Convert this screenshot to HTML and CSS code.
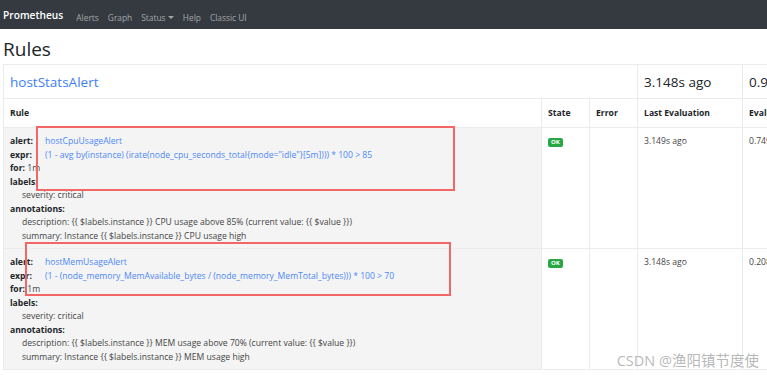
FILE: index.html
```html
<!DOCTYPE html>
<html lang="en">
<head>
    <meta charset="UTF-8">
    <meta name="viewport" content="width=device-width, initial-scale=1.0">
    <title>Prometheus Time Series Collection and Processing Server</title>
    <link rel="stylesheet" href="styles.css">
</head>
<body>
    <nav class="navbar">
        <a class="brand" href="#">Prometheus</a>
        <ul class="nav-links">
            <li><a href="#">Alerts</a></li>
            <li><a href="#">Graph</a></li>
            <li><a href="#">Status <span class="caret"></span></a></li>
            <li><a href="#">Help</a></li>
            <li><a href="#">Classic UI</a></li>
        </ul>
    </nav>

    <main class="page">
        <h1>Rules</h1>

        <table class="rules">
            <colgroup>
                <col class="col-rule">
                <col class="col-state">
                <col class="col-error">
                <col class="col-last">
                <col class="col-time">
            </colgroup>
            <tr class="group-row">
                <td colspan="3"><a class="group-name" href="#">hostStatsAlert</a></td>
                <td>3.148s ago</td>
                <td>0.958s</td>
            </tr>
            <tr class="head-row">
                <th>Rule</th>
                <th>State</th>
                <th>Error</th>
                <th>Last Evaluation</th>
                <th>Evaluation Time</th>
            </tr>

            <!-- Rule 1 -->
            <tr class="rule-row">
                <td class="rule-cell">
                    <div><span class="key key-wide">alert:</span><a href="#">hostCpuUsageAlert</a></div>
                    <div><span class="key key-wide">expr:</span><a href="#">(1 - avg by(instance) (irate(node_cpu_seconds_total{mode="idle"}[5m]))) * 100 &gt; 85</a></div>
                    <div><span class="key">for:</span> 1m</div>
                    <div><span class="key">labels:</span></div>
                    <div class="indent">severity: critical</div>
                    <div><span class="key">annotations:</span></div>
                    <div class="indent">description: {{ $labels.instance }} CPU usage above 85% (current value: {{ $value }})</div>
                    <div class="indent">summary: Instance {{ $labels.instance }} CPU usage high</div>
                </td>
                <td><span class="badge">OK</span></td>
                <td></td>
                <td>3.149s ago</td>
                <td>0.749ms</td>
            </tr>

            <!-- Rule 2 -->
            <tr class="rule-row">
                <td class="rule-cell">
                    <div><span class="key key-wide">alert:</span><a href="#">hostMemUsageAlert</a></div>
                    <div><span class="key key-wide">expr:</span><a href="#">(1 - (node_memory_MemAvailable_bytes / (node_memory_MemTotal_bytes))) * 100 &gt; 70</a></div>
                    <div><span class="key">for:</span> 1m</div>
                    <div><span class="key">labels:</span></div>
                    <div class="indent">severity: critical</div>
                    <div><span class="key">annotations:</span></div>
                    <div class="indent">description: {{ $labels.instance }} MEM usage above 70% (current value: {{ $value }})</div>
                    <div class="indent">summary: Instance {{ $labels.instance }} MEM usage high</div>
                </td>
                <td><span class="badge">OK</span></td>
                <td></td>
                <td>3.148s ago</td>
                <td>0.208ms</td>
            </tr>
        </table>
    </main>

    <!-- highlight boxes drawn over the screenshot -->
    <div class="mark mark-one"></div>
    <div class="mark mark-two"></div>

    <div class="watermark">CSDN @渔阳镇节度使</div>
</body>
</html>
```

FILE: styles.css
```css
body {
    font-family: "Open Sans", "Noto Sans", Arial, sans-serif;
    color: #212529;
    background-color: #fff;
    margin: 0;
    padding: 0;
    overflow: hidden;
    position: relative;
    width: 767px;
    height: 375px;
}
a {
    color: #2f7cf6;
    text-decoration: none;
}
.navbar {
    background-color: #343a40;
    height: 29px;
    display: flex;
    align-items: center;
    padding: 0 3px;
}
.brand {
    color: #fff;
    font-size: 10.2px;
    font-weight: 600;
    margin-right: 13px;
}
.nav-links {
    list-style: none;
    display: flex;
    gap: 9px;
    margin: 0;
    padding: 0;
}
.nav-links a {
    color: rgba(255, 255, 255, 0.55);
    font-size: 8.4px;
}
.caret {
    display: inline-block;
    width: 0;
    height: 0;
    border-left: 3px solid transparent;
    border-right: 3px solid transparent;
    border-top: 3px solid rgba(255, 255, 255, 0.55);
    vertical-align: 2px;
}
.page {
    padding: 0 3px;
}
h1 {
    font-size: 19px;
    font-weight: 500;
    margin: 10px 0 5px;
    line-height: 20px;
}
.rules {
    border-collapse: collapse;
    width: 860px;
    table-layout: fixed;
    font-size: 8.6px;
}
.col-rule {
    width: 538px;
}
.col-state {
    width: 48px;
}
.col-error {
    width: 48px;
}
.col-last {
    width: 105px;
}
.rules td,
.rules th {
    border: 1px solid #e9ecef;
    vertical-align: top;
    text-align: left;
}
.group-row td {
    font-size: 13.5px;
    height: 33px;
    vertical-align: middle;
    padding: 0 6px;
}
.group-name {
    color: #3d7ff6;
}
.head-row th {
    font-weight: 700;
    height: 28px;
    vertical-align: middle;
    padding: 0 6px;
    white-space: nowrap;
}
.rule-row td {
    padding: 7px 6px 5px;
    color: #444;
    white-space: nowrap;
}
.rule-cell {
    background-color: #f4f4f4;
    line-height: 13.5px;
}
.rule-cell a {
    color: #4d88f7;
}
.key {
    font-weight: 700;
    color: #212529;
}
.key-wide {
    display: inline-block;
    width: 35px;
}
.indent {
    padding-left: 12px;
}
.badge {
    display: inline-block;
    background-color: #28a745;
    color: #fff;
    font-size: 6px;
    font-weight: 700;
    line-height: 9px;
    padding: 0 3px;
    border-radius: 2px;
    margin-top: 2px;
}
.mark {
    position: absolute;
    border: 2px solid #f26666;
}
.mark-one {
    left: 36px;
    top: 126px;
    width: 415px;
    height: 61px;
}
.mark-two {
    left: 25px;
    top: 242px;
    width: 422px;
    height: 50px;
}
.watermark {
    position: absolute;
    right: 8px;
    bottom: 5px;
    font-family: "Open Sans", "Noto Sans CJK SC", sans-serif;
    font-size: 14.5px;
    color: rgba(160, 160, 160, 0.75);
}
```
